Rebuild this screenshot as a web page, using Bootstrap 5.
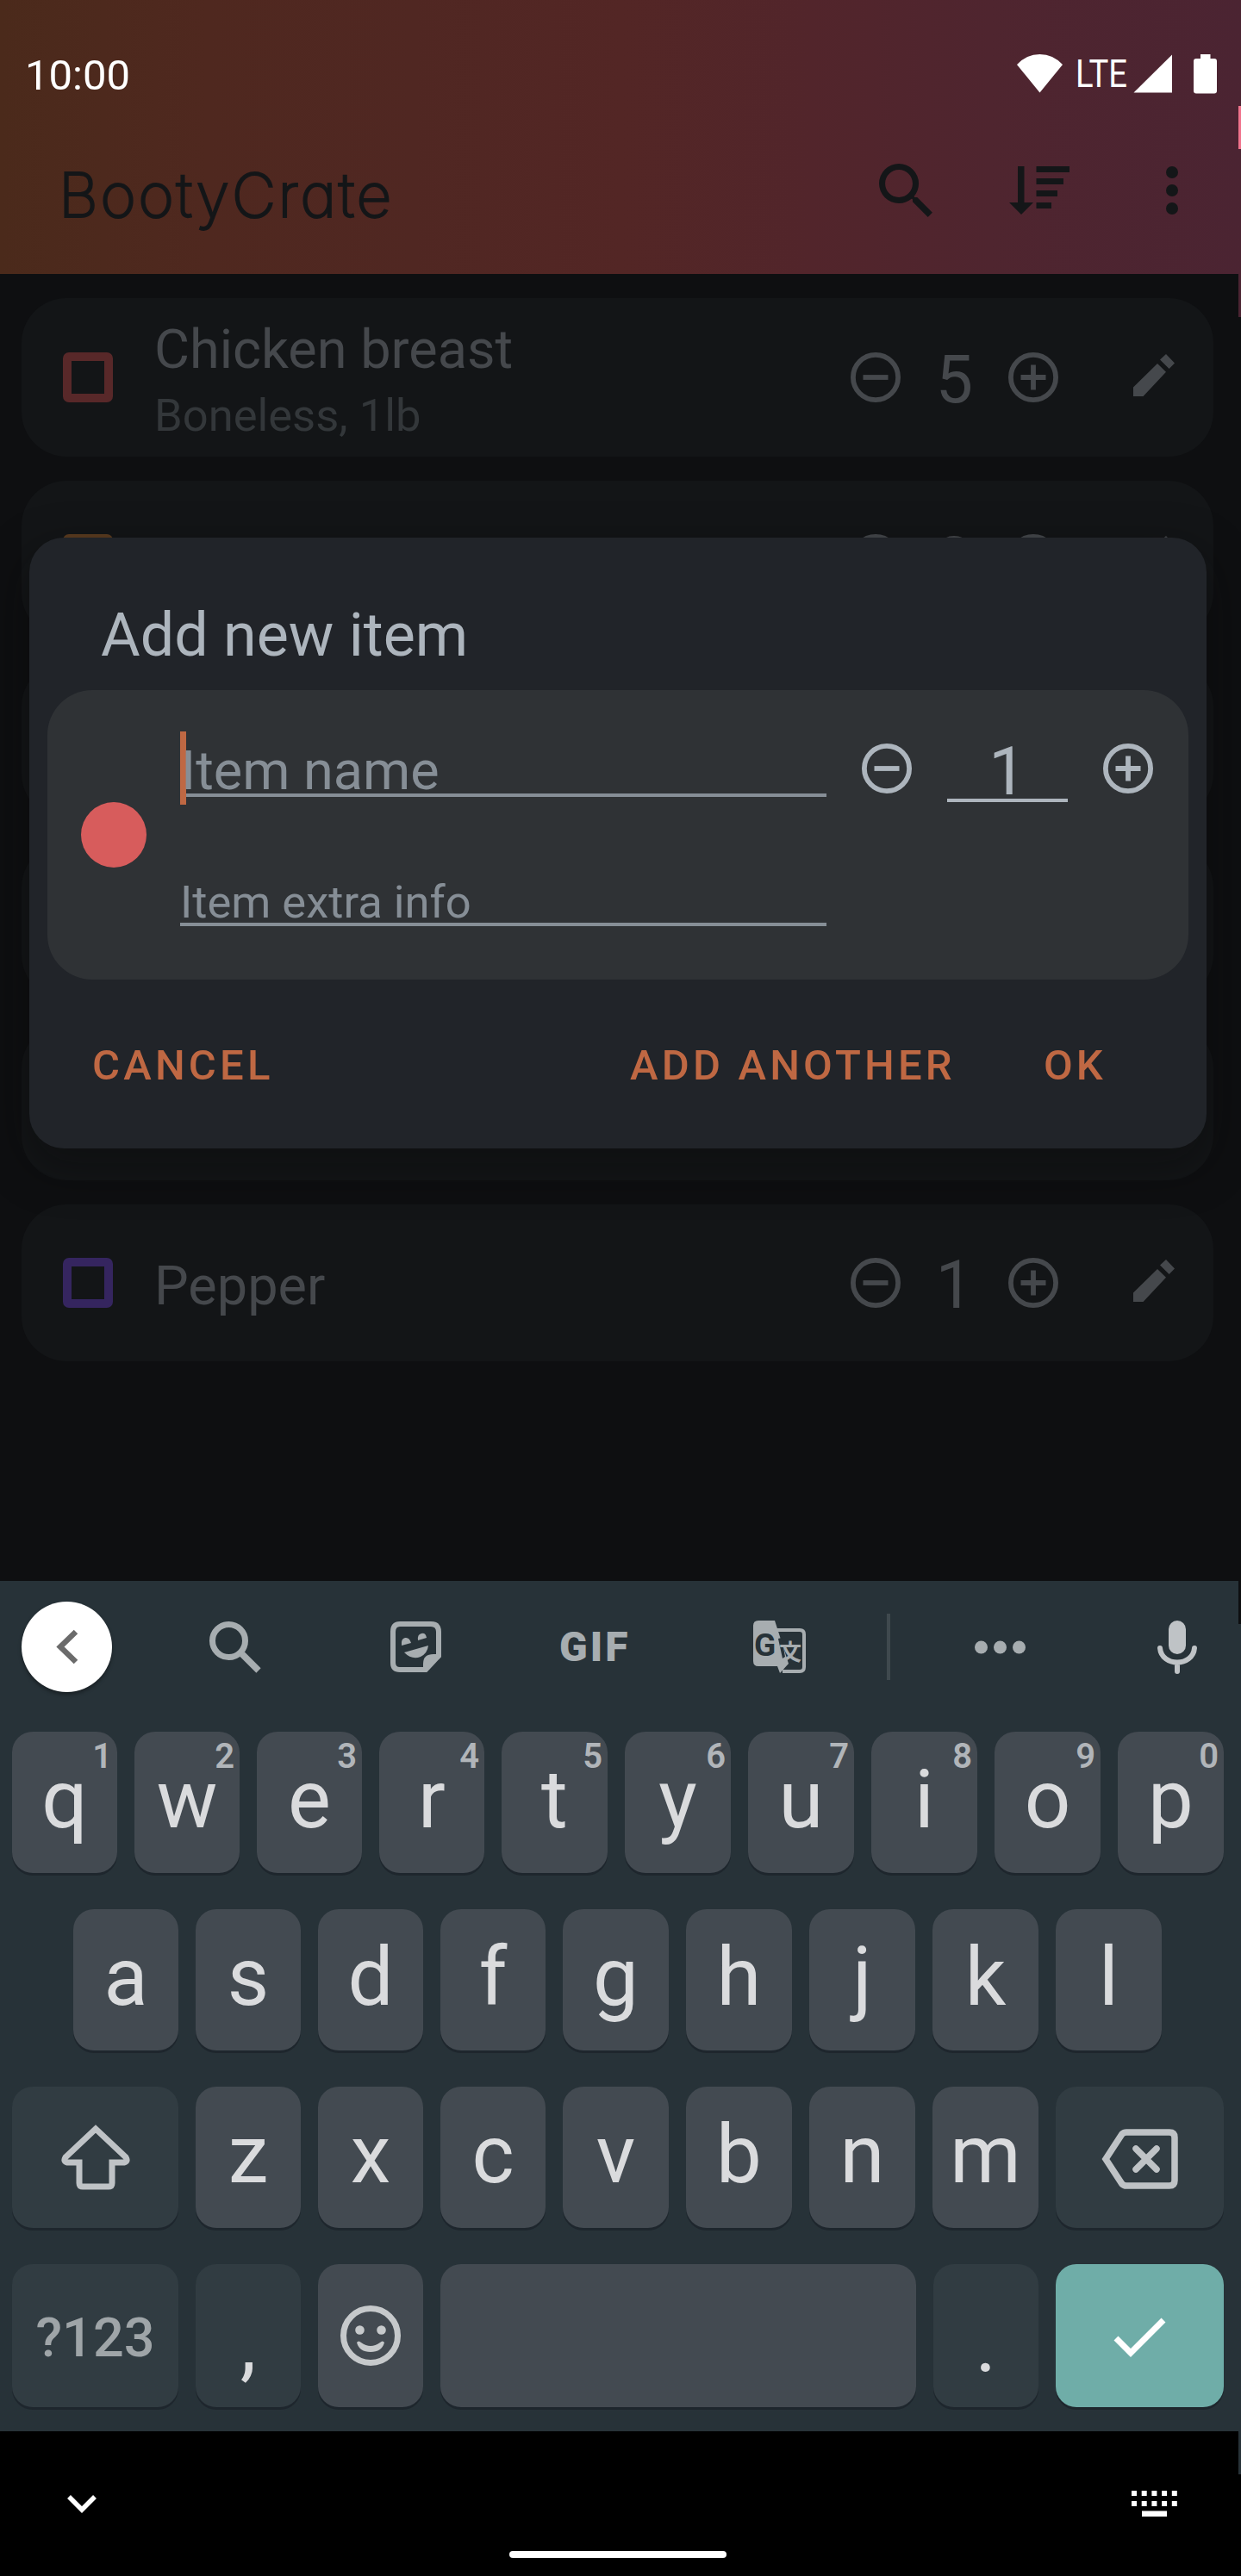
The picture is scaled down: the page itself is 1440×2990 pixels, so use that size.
<!DOCTYPE html>
<html lang="en">
<head>
<meta charset="utf-8">
<meta name="viewport" content="width=device-width, initial-scale=1">
<title>BootyCrate</title>
<link rel="stylesheet" href="https://cdn.jsdelivr.net/npm/bootstrap@5.3.0/dist/css/bootstrap.min.css">
<style>
  body { font-family: Roboto, "Liberation Sans", sans-serif; background: #0e0f11; margin: 0; }
  svg { display: block; flex: none; overflow: visible; }
  .screen { width: 1440px; height: 2990px; }

  /* header */
  .app-head { height: 318px; background: linear-gradient(90deg, #4b2a1b 0, #4f281f 240px, #502722 480px, #532625 720px, #52252b 940px, #4f252f 1150px, #4b2432 100%); }
  .status { height: 123px; padding: 53px 28px 0 29px; color: #fff; font-size: 49px; line-height: 60px; }
  .toolbar-app { height: 195px; padding: 0 73px 0 68px; color: #141618; }
  .brand-name { font-family: Inter, sans-serif; font-weight: 200; font-size: 71px; line-height: 80px; letter-spacing: 2.4px; margin-top: 11px; font-feature-settings: "cv11"; -webkit-text-stroke: 2px #141618; stroke-linejoin: round; }
  .gap-sort { margin-left: 89px; }
  .gap-more { margin-left: 112px; }

  /* list */
  .items { height: 1517px; padding: 28px 32px 0 25px; gap: 28px; }
  .item-card { height: 182px; border-radius: 52px; background: #131517; color: #45484c; padding: 0 45px 0 48px; flex: none; }
  .item-card.tall { height: 184px; }
  .check { width: 58px; height: 58px; border: 10px solid; border-radius: 7px; flex: none; }
  .check-red { border-color: #582829; }
  .check-orange { border-color: #5b3c20; }
  .check-purple { border-color: #35255f; }
  .item-title { font-size: 63px; line-height: 74px; }
  .item-note { font-size: 52.5px; line-height: 62px; color: #33373a; margin-top: 8px; }
  .two-line { padding-top: 6px; }
  .amount { font-size: 77px; line-height: 90px; width: 125px; padding-top: 6px; }
  .pencil { margin: 0 0 5px 87px; }

  /* dialog */
  .sheet { left: 34px; top: 624px; width: 1366px; height: 709px; border-radius: 40px; background: #212429; box-shadow: 0 20px 50px 8px rgba(8,10,8,.35); color: #adb5bd; padding: 0 21px; }
  .sheet-title { height: 177px; padding: 72px 0 0 62px; font-size: 70px; line-height: 82px; font-weight: 400; }
  .form-box { height: 336px; border-radius: 52px; background: #2f3235; padding-left: 39px; }
  .swatch { width: 76px; height: 76px; background: #d75c5c; flex: none; }
  .fields { margin-left: 39px; width: 750px; padding-top: 48px; color: #868e96; }
  .field { border-bottom: 4px solid #868e96; }
  .field-name { height: 76px; font-size: 63px; line-height: 82px; padding-left: 1px; padding-top: 5px; }
  .field-note { height: 76px; font-size: 52.5px; line-height: 66px; padding: 15px 0 0; margin-top: 74px; }
  .caret { left: 0; top: 0; width: 7px; height: 85px; background: #bf6843; }
  .qty { width: 140px; height: 80px; border-bottom: 4px solid #adb5bd; font-size: 77px; line-height: 90px; margin: 0 41px; }
  .stepper { padding: 50px 0 0 41px; }
  .stepper svg { margin-top: 12px; }
  .btn-flat { color: #bf6843; font-size: 49px; font-weight: 500; letter-spacing: 4.2px; line-height: 60px; padding: 0; border: 0; }
  .btn-ok { margin-left: 102px; }
  .sheet-actions { padding: 70px 95px 0 52px; }

  /* keyboard */
  .kb { height: 987px; background: #273238; }
  .kb-tools { height: 175px; padding: 0 0 22px 25px; color: #a7adb0; }
  .kb-back { width: 105px; height: 105px; background: #fff; box-shadow: 0 3px 4px rgba(0,0,0,.35); flex: none; }
  .tool-search { margin-left: 113px; }
  .tool-sticker { margin-left: 150px; }
  .gif-word { width: 84px; margin-left: 137px; font-weight: 900; font-size: 48px; line-height: 50px; letter-spacing: 3px; }
  .tool-translate { margin-left: 141px; }
  .kb-rule { width: 4px; height: 77px; background: #3f494e; margin-left: 94px; }
  .tool-more { margin-left: 98px; }
  .tool-mic { margin-left: 153px; }
  .key-line { height: 164px; gap: 20px; padding-left: 14px; margin-bottom: 42px; }
  .key-line.inset { padding-left: 85px; }
  .key-line.base { height: 166px; margin: 0; }
  .key { flex: 0 0 122px; border-radius: 24px; background: #434a51; box-shadow: 0 3px 0 #1e262d; color: #dadbdd; font-size: 94px; line-height: 110px; text-align: center; padding-top: 24px; }
  .key:nth-child(n+5) { flex-basis: 123px; }
  .key.special { background: #313c42; }
  .key.wide { flex-basis: 193px; padding: 0; color: #bfc3c6; }
  .key.wide:last-child { flex-basis: 195px; }
  .key.spacebar { flex-basis: 552px; }
  .key.enter { background: #6fada8; }
  .key.sym { font-size: 63px; font-weight: 500; color: #9fa5a8; line-height: 171px; }
  .key.punct { padding-top: 37px; flex-basis: 122px; }
  .hint { right: 6px; top: 0; font-size: 40px; line-height: 47px; font-weight: 600; padding-top: 5px; color: #b1b5b9; }

  /* system navigation */
  .nav-sys { height: 168px; background: #000; padding: 69px 74px 0 78px; }
  .home-pill { left: 591px; bottom: 21px; width: 252px; height: 8px; border-radius: 4px; background: #fff; }

  /* edge sliver */
  .edge { left: 1437px; width: 3px; }
  .edge-pink { top: 123px; height: 50px; background: #f0738c; }
  .edge-wine { top: 318px; height: 50px; background: #4b2432; }
  .edge-dark { top: 1835px; height: 50px; background: #0e0f11; }
  .edge-slate { top: 2822px; height: 50px; background: #273238; }
</style>
</head>
<body>
<svg width="0" height="0" class="position-absolute">
  <symbol id="minus" viewBox="0 0 20 20"><circle cx="10" cy="10" r="9" fill="none" stroke="currentColor" stroke-width="2"/><path d="M5 9h10v2H5z" fill="currentColor"/></symbol>
  <symbol id="plus" viewBox="0 0 20 20"><circle cx="10" cy="10" r="9" fill="none" stroke="currentColor" stroke-width="2"/><path d="M5 9h4V5h2v4h4v2h-4v4H9v-4H5z" fill="currentColor"/></symbol>
  <symbol id="pencil" viewBox="0 0 48 49"><path d="M38 0l10 10.5-6.4 6.5L31 6.6zM28 11l10 9.7L11.5 49H0V38.6z" fill="currentColor"/></symbol>
</svg>

<div class="screen position-relative overflow-hidden d-flex flex-column">
  <header class="app-head">
    <div class="status d-flex align-items-center justify-content-between">
      <span>10:00</span>
      <svg width="232" height="50" viewBox="1180 63 232 50" fill="#fff">
        <path d="M1206.500 107.500L1180 75Q1191 63 1206.500 63T1233 75z"/>
        <text x="1248" y="101" font-size="43.500" textLength="60" lengthAdjust="spacingAndGlyphs">LTE</text>
        <path d="M1315.500 107.500H1360V63.500z"/>
        <path d="M1393 63h11.500v5h4.500q3 0 3 3v34.500q0 3-3 3h-21q-3 0-3-3V71q0-3 3-3h5z"/>
      </svg>
    </div>
    <div class="toolbar-app d-flex align-items-center">
      <div class="brand-name me-auto">BootyCrate</div>
      <svg width="62" height="62" viewBox="3 3 17.500 17.500" fill="currentColor"><path d="M15.500 14h-.79l-.28-.27A6.470 6.470 0 0 0 16 9.500 6.500 6.500 0 1 0 9.500 16c1.610 0 3.090-.59 4.230-1.570l.27.28v.79l5 4.990L20.490 19l-4.990-5zm-6 0C7.010 14 5 11.990 5 9.500S7.010 5 9.500 5 14 7.010 14 9.500 11.990 14 9.500 14z"/></svg>
      <svg class="gap-sort" width="70" height="56" viewBox="0 0 70 56" fill="currentColor"><path d="M10 0h7.500v42H28L14 56 0 42h10zM31.500 0H70v7H31.500zM31.500 14H63v7H31.500zM31.500 28H56v7H31.500zM31.500 42H49v7H31.500z"/></svg>
      <svg class="gap-more" width="14" height="56" viewBox="0 0 14 56" fill="currentColor"><circle cx="7" cy="7" r="7"/><circle cx="7" cy="28" r="7"/><circle cx="7" cy="49" r="7"/></svg>
    </div>
  </header>

  <main class="items d-flex flex-column">
    <div class="item-card tall d-flex align-items-center">
      <div class="check check-red"></div>
      <div class="ms-5 me-auto two-line"><div class="item-title">Chicken breast</div><div class="item-note">Boneless, 1lb</div></div>
      <svg width="58" height="58"><use href="#minus"/></svg><div class="amount text-center">5</div><svg width="58" height="58"><use href="#plus"/></svg>
      <svg class="pencil" width="48" height="49"><use href="#pencil"/></svg>
    </div>
    <div class="item-card d-flex align-items-center">
      <div class="check check-orange me-auto"></div>
      <svg width="58" height="58"><use href="#minus"/></svg><div class="amount text-center">2</div><svg width="58" height="58"><use href="#plus"/></svg>
      <svg class="pencil" width="48" height="49"><use href="#pencil"/></svg>
    </div>
    <div class="item-card"></div>
    <div class="item-card"></div>
    <div class="item-card"></div>
    <div class="item-card d-flex align-items-center">
      <div class="check check-purple"></div>
      <div class="ms-5 me-auto item-title pt-2">Pepper</div>
      <svg width="58" height="58"><use href="#minus"/></svg><div class="amount text-center">1</div><svg width="58" height="58"><use href="#plus"/></svg>
      <svg class="pencil" width="48" height="49"><use href="#pencil"/></svg>
    </div>
  </main>

  <section class="sheet position-absolute">
    <h1 class="sheet-title m-0">Add new item</h1>
    <div class="form-box d-flex align-items-start">
      <div class="swatch rounded-circle align-self-center"></div>
      <div class="fields">
        <div class="field field-name position-relative"><span class="caret position-absolute"></span><span class="position-relative">Item name</span></div>
        <div class="field field-note">Item extra info</div>
      </div>
      <div class="stepper d-flex">
        <svg width="58" height="58"><use href="#minus"/></svg>
        <div class="qty text-center">1</div>
        <svg width="58" height="58"><use href="#plus"/></svg>
      </div>
    </div>
    <div class="sheet-actions d-flex">
      <button class="btn btn-flat me-auto">CANCEL</button>
      <button class="btn btn-flat">ADD ANOTHER</button>
      <button class="btn btn-flat btn-ok">OK</button>
    </div>
  </section>

  <section class="kb">
    <div class="kb-tools d-flex align-items-center">
      <div class="kb-back rounded-circle d-flex align-items-center justify-content-center">
        <svg width="26" height="41" viewBox="0 0 26 41"><path d="M23 3L5 20.500 23 38" fill="none" stroke="#6b6b6b" stroke-width="6.500"/></svg>
      </div>
      <svg class="tool-search" width="60" height="60" viewBox="0 0 60 60" fill="none" stroke="currentColor"><circle cx="22.500" cy="22.500" r="19" stroke-width="7"/><path d="M38 38L57 57" stroke-width="7.500"/></svg>
      <svg class="tool-sticker" width="59" height="59" viewBox="0 0 59 59" fill="currentColor"><path d="M11 3H47Q56 3 56 12V40L41 56H11Q3 56 3 48V12Q3 3 11 3z" fill="none" stroke="currentColor" stroke-width="6"/><path d="M38 57V49q0-11 12-11h8L41 57z"/><path d="M13 28q-1-8 4-9 5-1 7 6zM32 22q-1-7 4-8 5-1 6 5zM16 36L44 28q-1 9-9 13-10 4-19-5z"/></svg>
      <div class="gif-word">GIF</div>
      <svg class="tool-translate" width="61" height="62" viewBox="0 0 61 62"><path d="M28 11H54q5 0 5 5V54q0 5-5 5H34" fill="none" stroke="currentColor" stroke-width="4"/><path d="M6 0H25L41 50 31 61 28 53H6Q0 53 0 47V6Q0 0 6 0z" fill="currentColor"/><text x="1" y="41" font-size="37" font-weight="700" fill="#273238">G</text><path d="M29 21l4-1 4 22-3 2z" fill="#273238"/><text x="30" y="46" font-family="Noto Sans CJK JP, sans-serif" font-weight="700" font-size="26" fill="currentColor">文</text></svg>
      <div class="kb-rule"></div>
      <svg class="tool-more" width="59" height="16" viewBox="0 0 59 16" fill="currentColor"><circle cx="7.500" cy="8" r="7.500"/><circle cx="29.500" cy="8" r="7.500"/><circle cx="51.500" cy="8" r="7.500"/></svg>
      <svg class="tool-mic" width="46" height="62" viewBox="0 0 46 62" fill="none" stroke="#bfc3c6" stroke-linecap="round"><path d="M23 10V29" stroke-width="20"/><path d="M3 32C5 54 41 54 43 32M23 50v9" stroke-width="6"/></svg>
    </div>

    <div class="key-line d-flex">
      <div class="key position-relative">q<span class="hint position-absolute">1</span></div>
      <div class="key position-relative">w<span class="hint position-absolute">2</span></div>
      <div class="key position-relative">e<span class="hint position-absolute">3</span></div>
      <div class="key position-relative">r<span class="hint position-absolute">4</span></div>
      <div class="key position-relative">t<span class="hint position-absolute">5</span></div>
      <div class="key position-relative">y<span class="hint position-absolute">6</span></div>
      <div class="key position-relative">u<span class="hint position-absolute">7</span></div>
      <div class="key position-relative">i<span class="hint position-absolute">8</span></div>
      <div class="key position-relative">o<span class="hint position-absolute">9</span></div>
      <div class="key position-relative">p<span class="hint position-absolute">0</span></div>
    </div>
    <div class="key-line inset d-flex">
      <div class="key">a</div><div class="key">s</div><div class="key">d</div><div class="key">f</div><div class="key">g</div><div class="key">h</div><div class="key">j</div><div class="key">k</div><div class="key">l</div>
    </div>
    <div class="key-line d-flex">
      <div class="key special wide d-flex align-items-center justify-content-center">
        <svg width="80" height="76" viewBox="0 0 80 76" fill="none" stroke="currentColor" stroke-width="7" stroke-linejoin="round"><path d="M40 5L5 38q-3 5 2 6H21V68q0 4 4 4H55q4 0 4-4V44H73q5-1 2-6z" stroke-linejoin="miter"/></svg>
      </div>
      <div class="key">z</div><div class="key">x</div><div class="key">c</div><div class="key">v</div><div class="key">b</div><div class="key">n</div><div class="key">m</div>
      <div class="key special wide d-flex align-items-center justify-content-center">
        <svg class="mt-1" width="90" height="70" viewBox="0 0 90 70" fill="none" stroke="currentColor" stroke-width="7.500"><path d="M5 35L24 6q2-2 5-2H79q6 0 6 6V60q0 6-6 6H29q-3 0-5-2z"/><path d="M40 23L64 47M64 23L40 47" stroke-linecap="round"/></svg>
      </div>
    </div>
    <div class="key-line base d-flex">
      <div class="key special wide sym">?123</div>
      <div class="key special punct">,</div>
      <div class="key d-flex align-items-center justify-content-center p-0">
        <svg width="70" height="70" viewBox="0 0 70 70" fill="#c6c9cb"><circle cx="35" cy="35" r="31.500" fill="none" stroke="#c6c9cb" stroke-width="7"/><circle cx="22.500" cy="28.500" r="5.300"/><circle cx="47.500" cy="28.500" r="5.300"/><path d="M19 43q2-3 5 0 11 8 22 0 3-3 5 0-3 11-16 11T19 43z"/></svg>
      </div>
      <div class="key spacebar"></div>
      <div class="key special punct">.</div>
      <div class="key enter wide d-flex align-items-center justify-content-center">
        <svg class="mt-1" width="61" height="48" viewBox="0 0 61 48" fill="none" stroke="#fff" stroke-width="7"><path d="M3 25L20 42 58 4"/></svg>
      </div>
    </div>
  </section>

  <nav class="nav-sys position-relative d-flex justify-content-between">
    <svg class="mt-2" width="34" height="20" viewBox="0 -3 34 20"><path d="M2 -4L17 11 32 -4" fill="none" stroke="#fff" stroke-width="5.500"/></svg>
    <svg width="53" height="30" viewBox="0 0 53 30" fill="#fff"><path d="M0 0h6v6H0zM11.700 0h6v6h-6zM23.400 0h6v6h-6zM35.100 0h6v6h-6zM46.800 0h6v6h-6zM0 12h6v6H0zM11.700 12h6v6h-6zM23.400 12h6v6h-6zM35.100 12h6v6h-6zM46.800 12h6v6h-6zM12 23.500h29v6.500H12z"/></svg>
    <div class="home-pill position-absolute"></div>
  </nav>

  <div class="edge edge-pink position-absolute"></div>
  <div class="edge edge-wine position-absolute"></div>
  <div class="edge edge-dark position-absolute"></div>
  <div class="edge edge-slate position-absolute"></div>
</div>
<script src="https://cdn.jsdelivr.net/npm/bootstrap@5.3.0/dist/js/bootstrap.bundle.min.js"></script>
</body>
</html>
